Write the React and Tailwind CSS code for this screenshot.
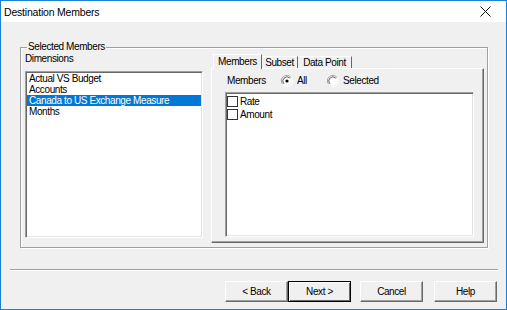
const sunken =
  "border border-t-[#a0a0a0] border-l-[#a0a0a0] border-b-white border-r-white bg-white shadow-[inset_1px_1px_0_#696969,inset_-1px_-1px_0_#e3e3e3]";

function Radio({ checked }) {
  return (
    <svg width="12" height="12" viewBox="0 0 12 12" className="shrink-0">
      <path d="M10 2.5A5 5 0 0 0 1.5 9" fill="none" stroke="#a0a0a0" />
      <path d="M2 9.5A5 5 0 0 0 10.5 3" fill="none" stroke="#ffffff" />
      <circle cx="6" cy="6" r="4" fill="#ffffff" />
      <path d="M8.8 3.2A4 4 0 0 0 3 8.8" fill="none" stroke="#696969" />
      {checked ? <circle cx="6" cy="6" r="1.6" fill="#000000" /> : null}
    </svg>
  );
}

function CheckItem({ label }) {
  return (
    <div className="flex h-[13px] items-center">
      <span className="h-[11px] w-[11px] shrink-0 border border-[#333333] bg-white" />
      <span className="ml-[2px] leading-[13px]">{label}</span>
    </div>
  );
}

function WinButton({ children, isDefault }) {
  return (
    <button
      type="button"
      className={
        isDefault
          ? "flex h-[21px] w-[63px] items-center justify-center border border-black bg-[#f0f0f0] text-black shadow-[inset_1px_1px_0_#ffffff,inset_-1px_-1px_0_#696969]"
          : "flex h-[21px] w-[63px] items-center justify-center border border-t-white border-l-white border-b-[#696969] border-r-[#696969] bg-[#f0f0f0] text-black shadow-[inset_-1px_-1px_0_#a0a0a0]"
      }
    >
      {children}
    </button>
  );
}

export default function App() {
  const dimensions = ["Actual VS Budget", "Accounts", "Canada to US Exchange Measure", "Months"];

  return (
    <div className="flex h-[310px] w-[507px] flex-col border border-[#1a81d5] bg-[#f0f0f0] font-['Liberation_Sans',Arial,sans-serif] text-[10px] tracking-[-0.4px] text-black">
      <div className="flex h-[21px] shrink-0 items-center justify-between bg-white pl-[3px] pr-[15px]">
        <span className="text-[10.5px] leading-[14px] tracking-[-0.2px]">Destination Members</span>
        <svg width="11" height="11" viewBox="0 0 11 11">
          <path d="M0.5 0.5L10.5 10.5M10.5 0.5L0.5 10.5" stroke="#111111" strokeWidth="1" />
        </svg>
      </div>

      <div className="relative ml-[19px] mt-[25px] h-[201px] w-[468px] shrink-0 border border-[#a0a0a0] shadow-[inset_1px_1px_0_#ffffff,1px_1px_0_#ffffff]">
        <span className="absolute left-[6px] top-[-8px] bg-[#f0f0f0] px-[1px] leading-[14px]">Selected Members</span>

        <div className="flex pl-[4px]">
          <div className="flex w-[178px] flex-col">
            <span className="mt-[5px] h-[12px] leading-[12px]">Dimensions</span>
            <div className={"mt-[6px] h-[167px] w-[178px] px-[1px] pt-[1px] " + sunken}>
              {dimensions.map((d, i) => (
                <div
                  key={d}
                  className={
                    i === 2
                      ? "h-[11px] bg-[#0078d7] pl-[2px] leading-[11px] text-white"
                      : "h-[11px] pl-[2px] leading-[11px]"
                  }
                >
                  {d}
                </div>
              ))}
            </div>
          </div>

          <div className="ml-[8px] mt-[6px] flex flex-col">
            <div className="relative z-10 flex items-end pl-[2px]">
              <div className="-mb-px flex h-[15px] w-[49px] items-start justify-center border-l border-r border-t border-l-white border-r-[#696969] border-t-white bg-[#f0f0f0] pt-[1px] leading-[12px]">
                Members
              </div>
              <div className="flex h-[12px] w-[36px] items-start justify-center border-r border-t border-r-[#696969] border-t-white leading-[12px]">
                Subset
              </div>
              <div className="flex h-[12px] w-[54px] items-start justify-center border-r border-t border-r-[#696969] border-t-white leading-[12px]">
                Data Point
              </div>
            </div>
            <div className="flex h-[175px] w-[273px] flex-col border border-t-white border-l-white border-b-[#696969] border-r-[#696969] shadow-[inset_-1px_-1px_0_#a0a0a0]">
              <div className="mt-[6px] flex h-[12px] items-center pl-[15px]">
                <span className="w-[54px] leading-[12px]">Members</span>
                <div className="flex w-[46px] items-center">
                  <Radio checked />
                  <span className="ml-[4px] leading-[12px]">All</span>
                </div>
                <div className="flex items-center">
                  <Radio />
                  <span className="ml-[4px] leading-[12px]">Selected</span>
                </div>
              </div>
              <div className={"ml-[13px] mt-[5px] h-[145px] w-[249px] pl-[1px] pt-[2px] " + sunken}>
                <CheckItem label="Rate" />
                <CheckItem label="Amount" />
              </div>
            </div>
          </div>
        </div>
      </div>

      <div className="ml-[9px] mt-[21px] h-[2px] w-[488px] shrink-0 border-b border-t border-b-white border-t-[#a0a0a0]" />

      <div className="ml-[224px] mt-[10px] flex">
        <WinButton>&lt; Back</WinButton>
        <WinButton isDefault>Next &gt;</WinButton>
        <div className="ml-[9px]">
          <WinButton>Cancel</WinButton>
        </div>
        <div className="ml-[11px]">
          <WinButton>Help</WinButton>
        </div>
      </div>
    </div>
  );
}
